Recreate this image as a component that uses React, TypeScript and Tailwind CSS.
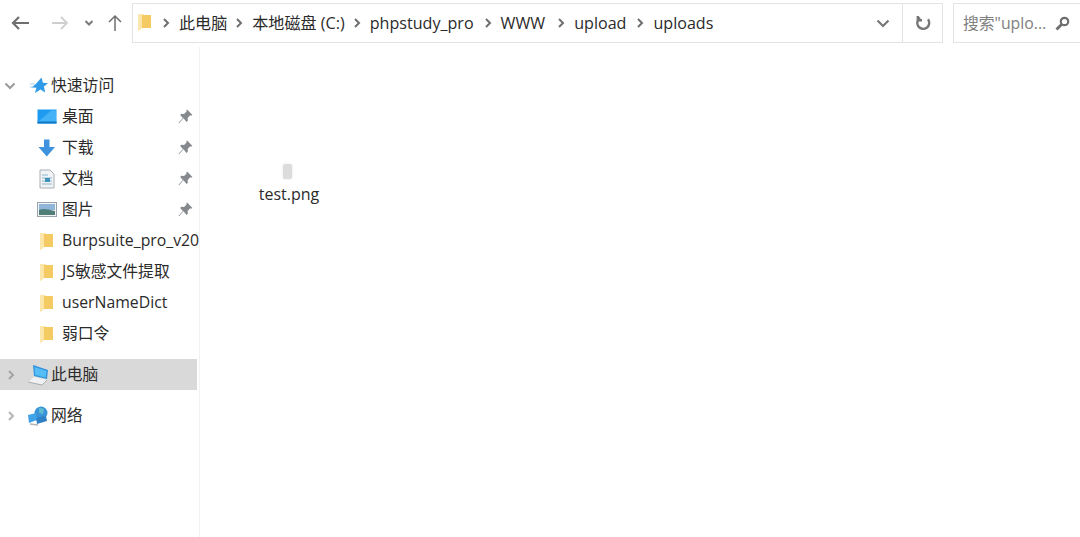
import React from "react";

const font = { fontFamily: '"Open Sans", "Noto Sans CJK SC", sans-serif' };

const Chevron = ({ className = "" }: { className?: string }) => (
  <svg width="8" height="10" viewBox="0 0 8 10" className={className}>
    <path d="M2 1l4 4-4 4" fill="none" stroke="currentColor" strokeWidth="2" />
  </svg>
);

const Folder = () => (
  <svg width="13" height="20" viewBox="0 0 13 20">
    <path d="M0 2h5l1 1h7v13H3l-3 3z" fill="#fae2a0" />
    <path d="M4 3h9v13H4z" fill="#f4cb62" />
    <path d="M0 2h3.500v15L0 19z" fill="#fbe6ab" />
  </svg>
);

const Pin = () => (
  <svg width="15" height="15" viewBox="0 0 14 14">
    <path d="M8.500 0.500L13.500 5.500l-1.300.7-.8-.3-2.400 2.600.2 2.500-1.200 1.100L5.100 8.700 1 13.300.5 12.900l4.100-4.500L2 5.700l1.100-1.200 2.600.2L8 2.300l-.2-.9z" fill="#85898d" />
  </svg>
);

const Star = () => (
  <svg width="18" height="18" viewBox="0 0 18 18">
    <path d="M11.500 0.500l1.400 5.300 5.100.4-4.100 3.400 1.300 6-4.700-3.100L5 16l1.400-5.300-5.200-.2 4.400-3.300z" fill="#2f9be8" />
    <path d="M0 7h5M0 10h4" stroke="#9fd2f5" strokeWidth="1" />
  </svg>
);

const Desktop = () => (
  <svg width="20" height="15" viewBox="0 0 20 15">
    <rect x="0.500" y="0.500" width="19" height="14" fill="#1e9bf0" />
    <path d="M1 13L14 1.500h5V13z" fill="#43b2f7" />
    <rect x="0.500" y="12.500" width="19" height="2" fill="#0f78c8" />
  </svg>
);

const Download = () => (
  <svg width="18" height="18" viewBox="0 0 18 18">
    <path d="M6 0.500h5.500v7.500H17L8.800 17.500 0.500 8H6z" fill="#3f92de" />
  </svg>
);

const Doc = () => (
  <svg width="16" height="20" viewBox="0 0 16 20">
    <path d="M1 1h10l4 4v14H1z" fill="#f1f3f5" stroke="#a9b0b6" />
    <path d="M3 6h6M3 9h10M3 12h10M3 15h10" stroke="#8fb8d4" strokeWidth="1" />
    <rect x="6" y="9" width="5" height="4" fill="#3f92b8" />
  </svg>
);

const Picture = () => (
  <svg width="20" height="15" viewBox="0 0 20 15">
    <rect x="0.500" y="0.500" width="19" height="14" fill="#f2f4f6" stroke="#9aa3ab" />
    <rect x="2" y="2" width="16" height="6" fill="#8fb6d8" />
    <path d="M2 8c4-2 8-1 16 1v4H2z" fill="#4f7f78" />
  </svg>
);

const Computer = () => (
  <svg width="22" height="22" viewBox="0 0 22 22">
    <path d="M5 1l15 5-1 9-13-3z" fill="#2f93dc" />
    <path d="M6.500 3l12 4-.8 6.500L7 11z" fill="#56bdf5" />
    <path d="M0 18l6-5 13 3-5 5z" fill="#eef0f1" />
    <path d="M0 18l14 3 5-5" fill="none" stroke="#a8aeb2" strokeWidth="1" />
  </svg>
);

const Network = () => (
  <svg width="20" height="20" viewBox="0 0 20 20">
    <circle cx="13" cy="7" r="6.500" fill="#3a93d8" />
    <path d="M11 1.500l5 1.500-1 5-4-1z" fill="#5fbcd0" />
    <path d="M0 9l8-2 1 7-8 3z" fill="#3fa3e8" />
    <path d="M8 12l10-2 1 5-10 3z" fill="#2f7fc4" />
    <path d="M2 18l8 1" stroke="#b0b6ba" strokeWidth="1.500" />
  </svg>
);

const quickItems = [
  { label: "桌面", icon: <Desktop /> },
  { label: "下载", icon: <Download /> },
  { label: "文档", icon: <Doc /> },
  { label: "图片", icon: <Picture /> },
];

const folders = ["Burpsuite_pro_v20", "JS敏感文件提取", "userNameDict", "弱口令"];

const crumbs = [
  { label: "此电脑", gap: "mr-[8px]" },
  { label: "本地磁盘 (C:)", gap: "mr-[8px]" },
  { label: "phpstudy_pro", gap: "mr-[10px]" },
  { label: "WWW", gap: "mr-[12px]" },
  { label: "upload", gap: "mr-[10px]" },
  { label: "uploads", gap: "mr-[10px]" },
];

const App: React.FC = () => {
  return (
    <div className="w-[1080px] h-[537px] bg-white overflow-hidden flex flex-col text-[15.800px] text-[#2b2b2b]" style={font}>
      {/* toolbar */}
      <div className="h-[47px] shrink-0 flex items-start pt-[3px]">
        <div className="w-[132px] h-[40px] shrink-0 flex items-center">
          <svg width="20" height="16" viewBox="0 0 20 16" className="ml-[10px] text-[#6f6f6f]">
            <path d="M19 8H3M9 2L3 8l6 6" fill="none" stroke="currentColor" strokeWidth="2.200" />
          </svg>
          <svg width="18" height="16" viewBox="0 0 18 16" className="ml-[21px] text-[#cfcfcf]">
            <path d="M1 8h15M10 2l6 6-6 6" fill="none" stroke="currentColor" strokeWidth="1.800" />
          </svg>
          <svg width="10" height="8" viewBox="0 0 10 8" className="ml-[15px] text-[#7a7a7a]">
            <path d="M1.500 2L5 5.500 8.500 2" fill="none" stroke="currentColor" strokeWidth="2" />
          </svg>
          <svg width="16" height="18" viewBox="0 0 16 18" className="ml-[13px] text-[#6f6f6f]">
            <path d="M8 17V2M2 8l6-6 6 6" fill="none" stroke="currentColor" strokeWidth="1.500" />
          </svg>
        </div>
        <div className="w-[811px] h-[40px] shrink-0 border border-[#e3e3e3] flex items-center">
          <div className="ml-[5px] mt-[-3px]"><Folder /></div>
          <div className="flex items-center ml-[11px] text-[16.100px]">
            {crumbs.map((c) => (
              <div key={c.label} className="flex items-center">
                <Chevron className="text-[#6f6f6f] mr-[9px]" />
                <span className={`${c.gap} whitespace-nowrap leading-none`}>{c.label}</span>
              </div>
            ))}
          </div>
          <svg width="14" height="9" viewBox="0 0 14 9" className="ml-auto mr-[12px] text-[#777]">
            <path d="M1.500 1.500L7 7l5.500-5.500" fill="none" stroke="currentColor" strokeWidth="2.200" />
          </svg>
          <div className="w-[40px] h-full border-l border-[#e3e3e3] flex items-center justify-center">
            <svg width="16" height="16" viewBox="0 0 16 16" className="text-[#777]">
              <path d="M5 2.800A6 6 0 1 0 13 4.200M2.800 1v4.200H7" fill="none" stroke="currentColor" strokeWidth="2.400" />
            </svg>
          </div>
        </div>
        <div className="ml-[10px] w-[140px] h-[40px] shrink-0 border border-[#e3e3e3] flex items-center">
          <span className="ml-[9px] mt-[1px] text-[#808080] whitespace-nowrap leading-none">搜索"uplo...</span>
          <svg width="15" height="15" viewBox="0 0 15 15" className="ml-[9px] text-[#6f6f6f]">
            <circle cx="9.500" cy="5.500" r="3.700" fill="none" stroke="currentColor" strokeWidth="2.200" />
            <path d="M6.500 8.500L1.500 13.500" stroke="currentColor" strokeWidth="2.800" />
          </svg>
        </div>
      </div>

      <div className="flex flex-1 min-h-0">
        {/* sidebar */}
        <div className="w-[200px] shrink-0 border-r border-[#f2f2f2] pt-[23px]">
          <div className="w-[197px]">
            <div className="h-[31px] flex items-center">
              <svg width="12" height="8" viewBox="0 0 12 8" className="ml-[4px] text-[#9a9a9a]">
                <path d="M1.500 1.500L6 6l4.500-4.500" fill="none" stroke="currentColor" strokeWidth="2" />
              </svg>
              <div className="ml-[14px] w-[18px] flex justify-center"><Star /></div>
              <span className="ml-[3px] leading-none">快速访问</span>
            </div>
            {quickItems.map((item) => (
              <div key={item.label} className="h-[31px] flex items-center">
                <div className="ml-[37px] w-[20px] shrink-0 flex justify-center">{item.icon}</div>
                <span className="ml-[5px] leading-none">{item.label}</span>
                <div className="ml-auto mr-[4px]"><Pin /></div>
              </div>
            ))}
            {folders.map((f) => (
              <div key={f} className="h-[31px] flex items-center">
                <div className="ml-[40px] w-[17px] shrink-0 flex"><Folder /></div>
                <span className="ml-[5px] leading-none whitespace-nowrap">{f}</span>
              </div>
            ))}
            <div className="h-[31px] mt-[10px] bg-[#d9d9d9] flex items-center">
              <Chevron className="ml-[7px] text-[#a3a3a3]" />
              <div className="ml-[13px] shrink-0"><Computer /></div>
              <span className="ml-[1px] leading-none">此电脑</span>
            </div>
            <div className="h-[31px] mt-[10px] flex items-center">
              <Chevron className="ml-[7px] text-[#b5b5b5]" />
              <div className="ml-[13px] shrink-0"><Network /></div>
              <span className="ml-[3px] leading-none">网络</span>
            </div>
          </div>
        </div>

        {/* file area */}
        <div className="flex-1 pt-[117px] pl-[59px]">
          <div className="w-[60px] flex flex-col items-center">
            <div className="w-[9px] h-[15px] mr-[4px] rounded-[2px] bg-[#dcdcdc] shadow-[0_0_3px_#e5e5e5]" />
            <span className="mt-[7px] leading-none text-[16px] whitespace-nowrap">test.png</span>
          </div>
        </div>
      </div>
    </div>
  );
};

export default App;
